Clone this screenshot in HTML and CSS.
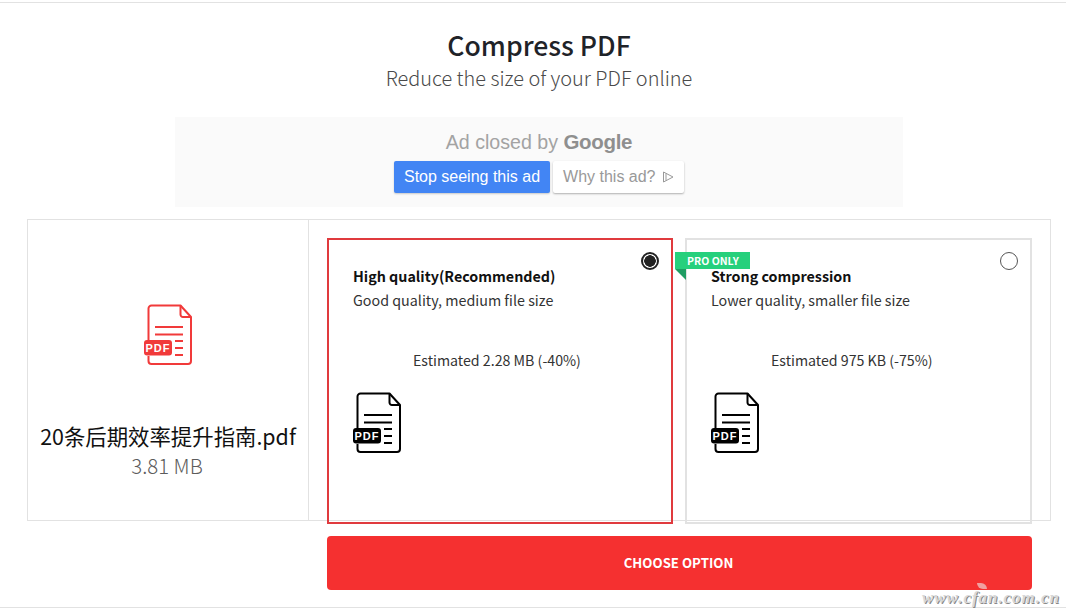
FILE: index.html
```html
<!DOCTYPE html>
<html lang="zh">
<head>
<meta charset="utf-8">
<title>Compress PDF</title>
<link rel="stylesheet" href="styles.css">
</head>
<body>
<svg class="sprite" width="0" height="0" aria-hidden="true">
  <symbol id="pdf-doc" viewBox="0 0 50 62">
    <path class="doc-line" d="M4.500 36V4.500a3 3 0 0 1 3-3h29l10.500 11.500v44a3 3 0 0 1-3 3H7.500a3 3 0 0 1-3-3v-5"/>
    <path class="doc-line" d="M36.500 1.500v9a2.500 2.500 0 0 0 2.500 2.500h8"/>
    <path class="doc-line" d="M11 23h28M11 30.500h28M31 37h8M31 44h8M31 51h8"/>
    <rect class="doc-fill" x="0" y="36" width="28" height="15.500" rx="3"/>
  </symbol>
</svg>
<main class="page">
  <header class="intro">
    <h1 class="title">Compress PDF</h1>
    <p class="subtitle">Reduce the size of your PDF online</p>
  </header>
  <section class="ad">
    <p class="ad-line">Ad closed by <b class="google">Google</b></p>
    <div class="ad-actions">
      <span class="ad-stop">Stop seeing this ad</span>
      <span class="ad-why">Why this ad?
        <svg class="ad-icon" width="12" height="12" viewBox="0 0 12 12"><path d="M1.500 1v10l9.500-5zM4 2.500v7"/></svg>
      </span>
    </div>
  </section>
  <section class="panel">
    <div class="file">
      <div class="file-icon red">
        <svg width="50" height="62"><use href="#pdf-doc"/></svg>
        <span class="doc-label">PDF</span>
      </div>
      <div class="file-name">20条后期效率提升指南.pdf</div>
      <div class="file-size">3.81 MB</div>
    </div>
    <div class="options">
      <article class="option selected">
        <span class="radio on"></span>
        <h2 class="option-title">High quality(Recommended)</h2>
        <p class="option-desc">Good quality, medium file size</p>
        <p class="option-est">Estimated 2.28 MB (-40%)</p>
        <div class="file-icon">
          <svg width="50" height="62"><use href="#pdf-doc"/></svg>
          <span class="doc-label">PDF</span>
        </div>
      </article>
      <article class="option">
        <span class="ribbon">PRO ONLY</span>
        <span class="radio"></span>
        <h2 class="option-title">Strong compression</h2>
        <p class="option-desc">Lower quality, smaller file size</p>
        <p class="option-est">Estimated 975 KB (-75%)</p>
        <div class="file-icon">
          <svg width="50" height="62"><use href="#pdf-doc"/></svg>
          <span class="doc-label">PDF</span>
        </div>
      </article>
    </div>
  </section>
  <div class="action">
    <button class="choose">CHOOSE OPTION</button>
  </div>
</main>
<div class="watermark">www.cfan.com.cn</div>
</body>
</html>
```
FILE: styles.css
```css
* { box-sizing: border-box; }
html, body { margin: 0; padding: 0; }
body {
  width: 1066px;
  height: 615px;
  overflow: hidden;
  background: #fff;
  color: #111;
  font-family: "Noto Sans CJK SC", "Noto Sans", sans-serif;
  position: relative;
}
.sprite { position: absolute; }
.page {
  margin-top: 2px;
  height: 606px;
  padding-left: 12px;
  border-top: 1px solid #e2e2e2;
  border-bottom: 1px solid #e2e2e2;
  display: flex;
  flex-direction: column;
  align-items: center;
}
.intro { text-align: center; height: 114px; padding-top: 23px; }
.title {
  margin: 0;
  font-size: 26.600px;
  line-height: 38px;
  font-weight: 500;
  color: #1f2328;
}
.subtitle {
  margin: 1px 0 0;
  font-family: "Noto Sans CJK SC Light", "Noto Sans CJK SC", sans-serif;
  font-size: 19.900px;
  line-height: 26px;
  font-weight: 300;
  color: #4a4a4a;
}
.ad {
  width: 728px;
  height: 90px;
  background: #fafafa;
  text-align: center;
  font-family: "Liberation Sans", Arial, sans-serif;
  margin-bottom: 12px;
  padding-top: 12px;
}
.ad-line { margin: 0; font-size: 19.600px; line-height: 26px; color: #a3a3a3; }
.google { font-size: 20.500px; color: #8f8f8f; font-weight: 700; letter-spacing: -.3px; }
.ad-actions { display: flex; justify-content: center; gap: 3px; margin-top: 6px; }
.ad-stop {
  background: #4285f4;
  color: #fff;
  font-size: 16px;
  width: 156px;
  height: 32px;
  line-height: 32px;
  border-radius: 2px;
  box-shadow: 0 1px 2px rgba(0,0,0,.2);
}
.ad-why {
  background: #fff;
  color: #999;
  font-size: 16px;
  width: 131px;
  height: 32px;
  line-height: 32px;
  border-radius: 2px;
  box-shadow: 0 1px 2px rgba(0,0,0,.3);
}
.ad-icon { fill: none; stroke: #999; stroke-width: 1; vertical-align: -1px; margin-left: 2px; }
.panel {
  width: 1024px;
  height: 302px;
  border: 1px solid #e2e2e2;
  display: flex;
}
.file {
  width: 281px;
  border-right: 1px solid #e2e2e2;
  display: flex;
  flex-direction: column;
  align-items: center;
  padding-top: 84px;
}
.file-name {
  margin-top: 55px;
  font-size: 21.400px;
  line-height: 30px;
  color: #111;
  white-space: nowrap;
}
.file-size {
  font-family: "Noto Sans CJK SC Light", "Noto Sans CJK SC", sans-serif;
  font-size: 20.400px;
  line-height: 29px;
  font-weight: 300;
  color: #5c5c5c;
  margin-right: 2px;
}
.options {
  display: flex;
  gap: 12px;
  padding: 18px 0 0 18px;
}
.option {
  position: relative;
  width: 346px;
  height: 286px;
  border: 2px solid #e2e2e2;
  padding: 26px 24px 0;
}
.option + .option { width: 347px; }
.option.selected { border-color: #e03a3e; }
.option-title {
  margin: 0;
  font-size: 14.300px;
  line-height: 20px;
  font-weight: 700;
  color: #111;
}
.option-desc {
  margin: 4px 0 0;
  font-size: 14.300px;
  line-height: 20px;
  font-weight: 400;
  color: #333;
}
.option-est {
  margin: 40px 0 0;
  padding-left: 60px;
  font-size: 14.200px;
  line-height: 20px;
  color: #333;
}
.option .file-icon { margin: 22px 0 0 0; }
.file-icon { position: relative; width: 50px; height: 62px; color: #000; }
.file-icon.red { color: #f13a3a; margin-left: 2px; }
.file-icon svg { display: block; color: inherit; }
.doc-line { fill: none; stroke: currentColor; stroke-width: 2; stroke-linejoin: round; }
.doc-fill { fill: currentColor; }
.doc-label {
  position: absolute;
  left: 0;
  top: 36px;
  width: 28px;
  height: 16px;
  color: #fff;
  font: 700 11px/16px "Liberation Sans", Arial, sans-serif;
  letter-spacing: 1px;
  text-align: center;
}
.radio {
  position: absolute;
  top: 12px;
  right: 12px;
  width: 18px;
  height: 18px;
  border: 1px solid #555;
  border-radius: 50%;
  background: #fff;
}
.radio.on {
  border: 2px solid #222;
  background: radial-gradient(circle, #222 0 5.500px, #fff 6px);
}
.ribbon {
  position: absolute;
  left: -12px;
  top: 12px;
  width: 75px;
  height: 17px;
  background: #26d07c;
  color: #fff;
  font-size: 10.500px;
  line-height: 17px;
  font-weight: 700;
  padding-left: 12px;
  white-space: nowrap;
}
.ribbon::after {
  content: "";
  position: absolute;
  left: 0;
  top: 17px;
  border-top: 11px solid #1f9d63;
  border-left: 11px solid transparent;
}
.action { width: 1024px; padding: 15px 19px 0 300px; }
.choose {
  display: block;
  width: 100%;
  height: 54px;
  border: 0;
  border-radius: 4px;
  background: #f53030;
  color: #fff;
  font-family: inherit;
  font-size: 13.200px;
  font-weight: 700;
  padding: 0 2px 2px 0;
}
.watermark {
  position: absolute;
  left: 922px;
  top: 588px;
  font: italic 700 17px "Liberation Serif", serif;
  letter-spacing: .95px;
  color: #d8d8d8;
  text-shadow: 1px 1px 0 #888;
}
.watermark::before {
  content: "";
  position: absolute;
  left: 55px;
  top: -5px;
  width: 10px;
  height: 6px;
  background: #f0a0a0;
  border-radius: 0 6px 0 6px;
}
```
